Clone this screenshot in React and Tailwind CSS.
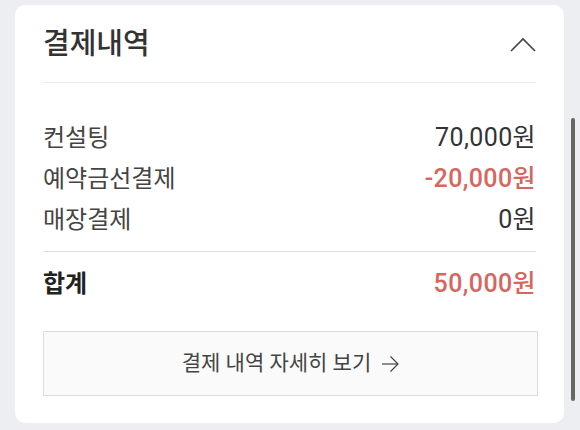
import React from "react";

const font = { fontFamily: 'Roboto, "Noto Sans CJK KR", "Noto Sans", sans-serif' };

function Row({ label, value, valueClass = "text-[#333]", bold = false }) {
  return (
    <div className="flex h-[41px] items-center justify-between">
      <span className={`text-[24px] leading-none ${bold ? "font-bold text-[#222]" : "text-[#444]"}`}>{label}</span>
      <span className={`text-[25px] leading-none tracking-[0.4px] ${valueClass}`}>{value}</span>
    </div>
  );
}

export default function App() {
  return (
    <div className="relative h-[430px] w-[580px] overflow-hidden bg-[#eceef1] pl-[15px] pt-[5px]" style={font}>
      <div className="flex h-[418px] w-[549px] flex-col rounded-[10px] bg-white px-[28px]">
        <div className="flex h-[78px] items-center justify-between border-b border-[#ececec] pt-[2px]">
          <span className="text-[29px] font-medium leading-none text-[#333]">결제내역</span>
          <svg width="28" height="18" viewBox="0 0 28 18" className="mr-[-1px]">
            <polyline points="2,15 14,3 26,15" fill="none" stroke="#444" strokeWidth="1.6" />
          </svg>
        </div>
        <div className="pt-[34px]">
          <Row label="컨설팅" value="70,000원" />
          <Row label="예약금선결제" value="-20,000원" valueClass="font-medium text-[#d7665f]" />
          <Row label="매장결제" value="0원" />
        </div>
        <div className="mt-[11px] border-t border-[#dedede] pt-[11px]">
          <Row label="합계" value="50,000원" valueClass="font-medium text-[#d7665f]" bold />
        </div>
        <button className="mt-[27px] -mr-[2px] flex h-[65px] items-center justify-center gap-[10px] border border-[#dcdcdc] bg-[#fafafa] text-[21px] text-[#444]">
          <span className="leading-none">결제 내역 자세히 보기</span>
          <svg width="18" height="18" viewBox="0 0 18 18">
            <line x1="1" y1="9" x2="17" y2="9" stroke="#444" strokeWidth="1.2" />
            <polyline points="9.5,1.5 17,9 9.5,16.5" fill="none" stroke="#444" strokeWidth="1.2" />
          </svg>
        </button>
      </div>
      <div className="absolute left-[571px] top-[118px] h-[283px] w-[4px] rounded-full bg-[#666]" />
    </div>
  );
}
